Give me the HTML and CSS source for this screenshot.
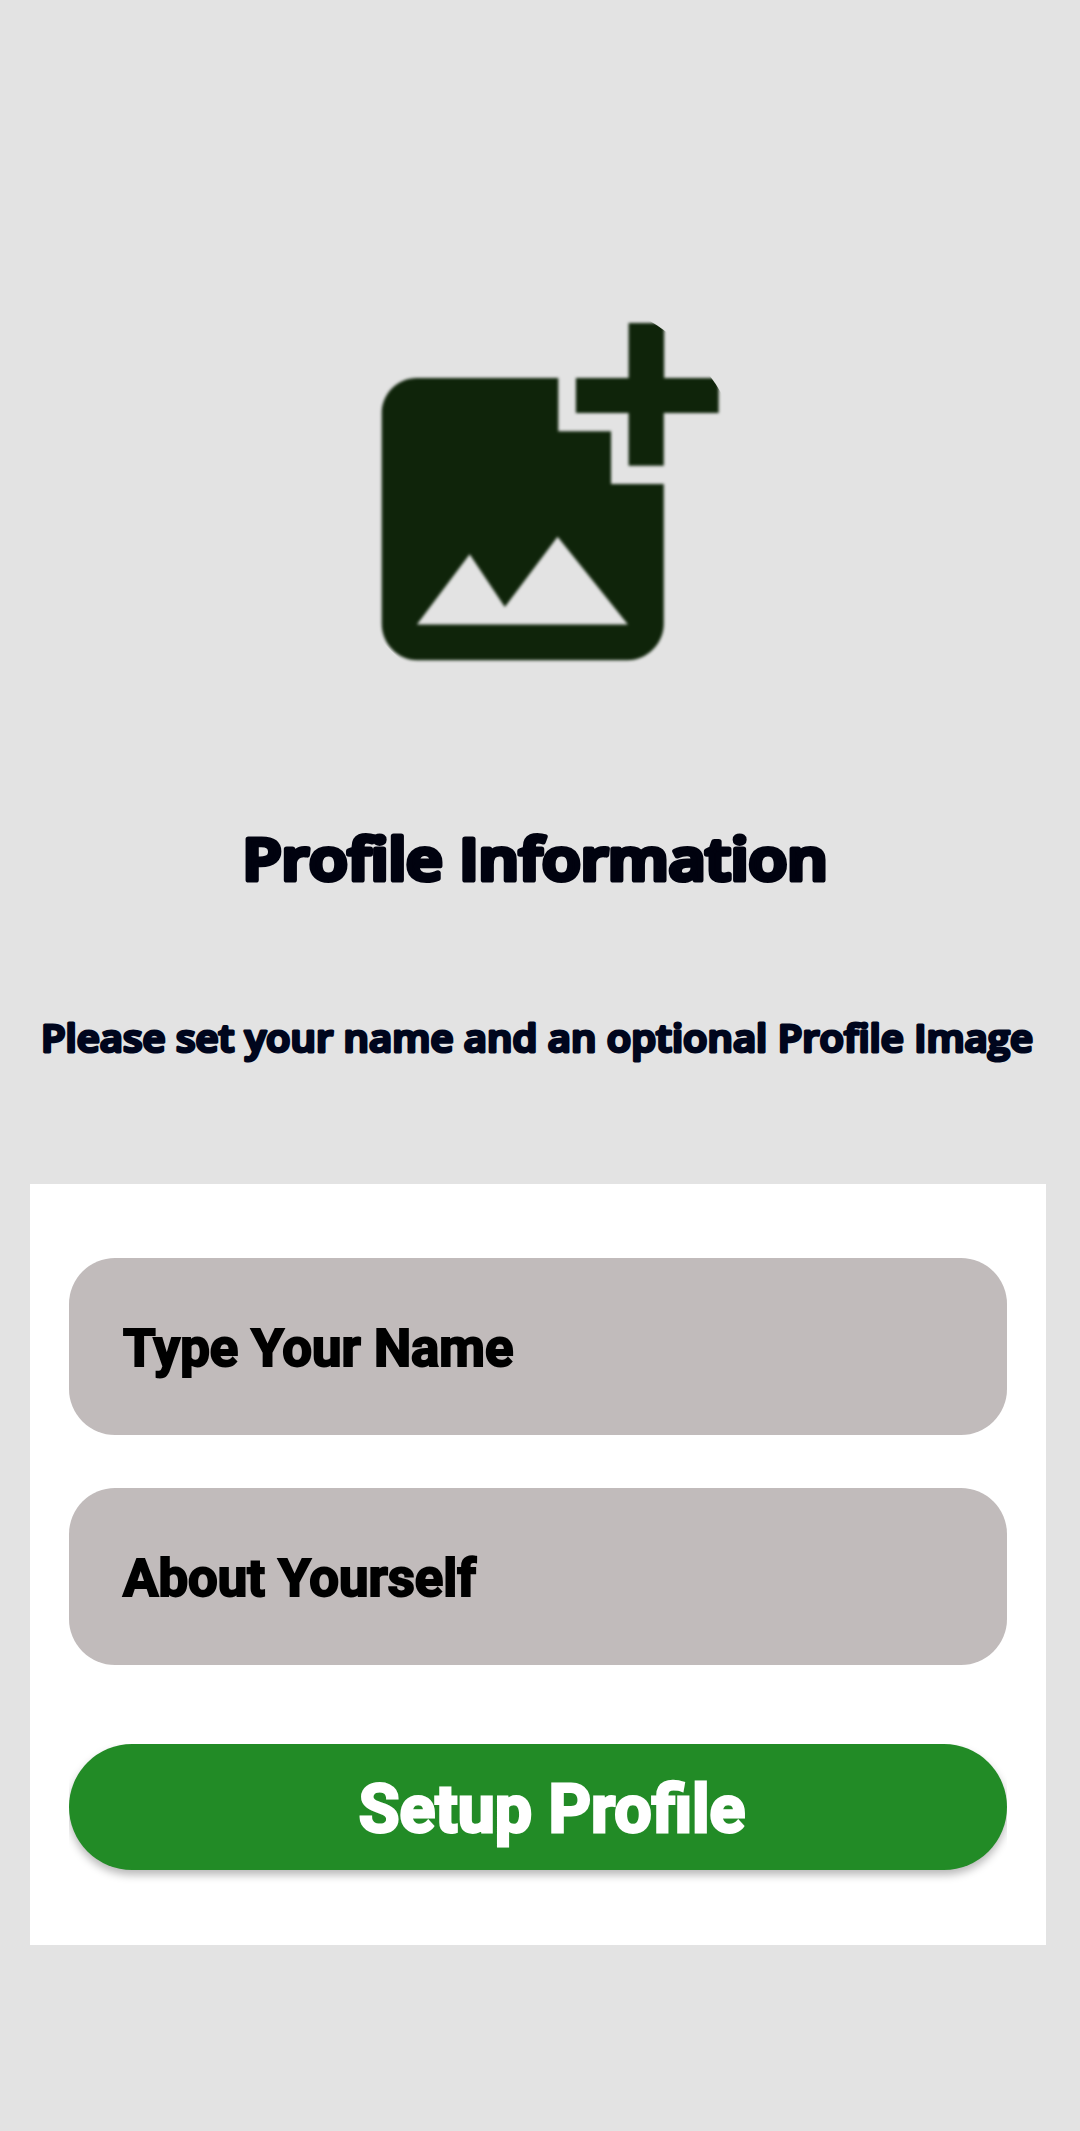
FILE: index.html
```html
<!DOCTYPE html>
<html lang="en">
<head>
<meta charset="utf-8">
<title>Profile Information</title>
<link rel="stylesheet" href="styles.css">
</head>
<body>
<main class="screen">
  <svg class="avatar" viewBox="0 0 24 24" aria-hidden="true">
    <defs>
      <clipPath id="round"><circle cx="12" cy="12" r="12"/></clipPath>
      <filter id="soft" color-interpolation-filters="sRGB"><feGaussianBlur stdDeviation="0.1"/></filter>
    </defs>
    <g clip-path="url(#round)">
      <path filter="url(#soft)" fill="#0f240a" d="M19.04 7v3h-2V7h-3V5h3V1.88h2.02V5h3.1v2H19.04zm-3 4.03V8.03h-3V5H5c-1.1 0-2 .9-2 2v12c0 1.1.9 2.06 2 2.06h12c1.1 0 2.04-.96 2.04-2.06v-7.97h-3zM5 19.03l3-4 2 3 3-4 4 5H5z"/>
    </g>
  </svg>
  <svg class="title" viewBox="0 0 1080 100" role="heading"><text x="242.5" y="69.5" textLength="585" lengthAdjust="spacingAndGlyphs">Profile Information</text></svg>
  <svg class="subtitle" viewBox="0 0 1080 80"><text x="41" y="51.5" textLength="992" lengthAdjust="spacingAndGlyphs">Please set your name and an optional Profile Image</text></svg>
  <form class="card">
    <div class="field">Type Your Name</div>
    <div class="field">About Yourself</div>
    <div class="button-slot"><button class="button" type="button">Setup Profile</button></div>
  </form>
</main>
</body>
</html>
```
FILE: styles.css
```css
body {
  margin: 0;
  background: #e3e3e3;
  font-family: Roboto, "Liberation Sans", sans-serif;
}
.screen {
  box-sizing: border-box;
  min-height: 2131px;
  padding-top: 290px;
  display: flex;
  flex-direction: column;
}
.avatar {
  width: 422px;
  height: 422px;
  margin-left: 329px;
}
.title, .subtitle {
  display: block;
  width: 1080px;
  font-family: "Open Sans", sans-serif;
  font-weight: 600;
  font-variant-ligatures: none;
  stroke-linejoin: round;
}
.title {
  height: 100px;
  margin-top: 98px;
  font-size: 57px;
  fill: #00020f;
  stroke: #00020f;
  stroke-width: 5.2px;
}
.subtitle {
  height: 80px;
  margin-top: 90px;
  font-size: 37px;
  fill: #00061d;
  stroke: #00061d;
  stroke-width: 3px;
}
.card {
  box-sizing: border-box;
  width: 1016px;
  height: 761px;
  margin: 104px 0 0 30px;
  padding: 74px 39px 0;
  background: #fff;
}
.field {
  box-sizing: border-box;
  height: 177px;
  margin-bottom: 53px;
  padding: 0 54px;
  border-radius: 46px;
  background: #c1bbbb;
  color: #000;
  font-size: 52.7px;
  font-weight: 700;
  line-height: 181px;
  -webkit-text-stroke: 2px #000;
}
.button-slot {
  margin-top: 79px;
  padding-bottom: 30px;
  overflow: hidden;
}
.button {
  display: block;
  width: 100%;
  height: 126px;
  padding: 5px 0 0 28px;
  border: 0;
  border-radius: 63px;
  background: #228b26;
  box-shadow: 0 5px 9px rgba(0, 0, 0, .28);
  color: #fff;
  font: 700 66.2px Roboto, sans-serif;
  -webkit-text-stroke: 2.8px #fff;
}
```
